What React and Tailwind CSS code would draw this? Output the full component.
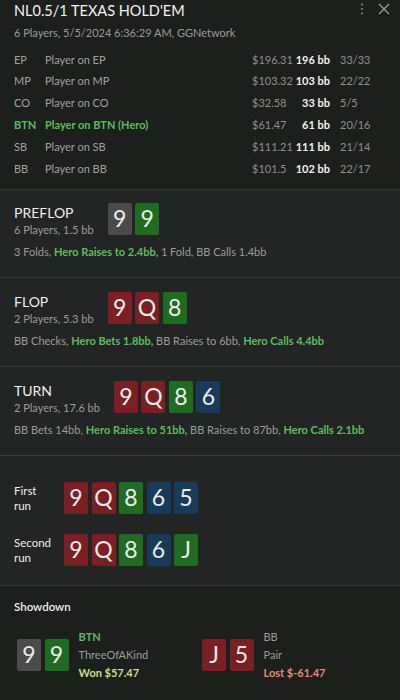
import React from "react";

const players = [
  { pos: "EP", name: "Player on EP", usd: "$196.31", bb: "196 bb", stat: "33/33" },
  { pos: "MP", name: "Player on MP", usd: "$103.32", bb: "103 bb", stat: "22/22" },
  { pos: "CO", name: "Player on CO", usd: "$32.58", bb: "33 bb", stat: "5/5" },
  { pos: "BTN", name: "Player on BTN (Hero)", usd: "$61.47", bb: "61 bb", stat: "20/16", hero: true },
  { pos: "SB", name: "Player on SB", usd: "$111.21", bb: "111 bb", stat: "21/14" },
  { pos: "BB", name: "Player on BB", usd: "$101.5", bb: "102 bb", stat: "22/17" },
];

const suitBg = {
  x: "bg-[#4a4b4a]",
  g: "bg-[#1f6b22]",
  r: "bg-[#7a2024]",
  b: "bg-[#1a3a5a]",
};

function Card({ rank, suit }) {
  return (
    <div
      className={`w-[24px] h-[32px] rounded-[2px] flex items-center justify-center text-[23px] leading-none text-[#ececec] ${suitBg[suit]}`}
    >
      {rank}
    </div>
  );
}

function Cards({ cards }) {
  return (
    <div className="flex gap-[3.5px]">
      {cards.map((c, i) => (
        <Card key={i} rank={c[0]} suit={c[1]} />
      ))}
    </div>
  );
}

function Street({ name, sub, cards, actions, pad }) {
  return (
    <div className={`border-t border-[#363937] bg-[#222523] px-[14px] ${pad}`}>
      <div className="flex items-start gap-[14px]">
        <div className="flex flex-col">
          <span className="text-[14px] leading-[19px] text-[#eeeeee]">{name}</span>
          <span className="text-[11px] leading-[16px] text-[#9b9b9b]">{sub}</span>
        </div>
        <Cards cards={cards} />
      </div>
      <div className="mt-[6px] text-[11px] leading-[16px] text-[#9b9b9b] whitespace-nowrap">
        {actions.map((a, i) => (
          <span key={i} className={a.hero ? "font-bold text-[#62b862]" : ""}>
            {a.t}
            {i < actions.length - 1 ? ", " : ""}
          </span>
        ))}
      </div>
    </div>
  );
}

export default function App() {
  return (
    <div className="w-[400px] h-[700px] overflow-hidden bg-[#1d1f1d] font-['Lato','Liberation_Sans',sans-serif] text-white">
      {/* header */}
      <div className="relative px-[14px] pt-[1px]">
        <div className="text-[14.5px] leading-[20px] text-[#f2f2f2]">NL0.5/1 TEXAS HOLD'EM</div>
        <div className="mt-[4px] text-[11px] leading-[16px] text-[#9a9a9a]">
          6 Players, 5/5/2024 6:36:29 AM, GGNetwork
        </div>
        <div className="absolute right-[10px] top-[3px] flex items-center gap-[14px]">
          <svg width="4" height="12" viewBox="0 0 4 12" fill="#8a8a8a">
            <circle cx="2" cy="1.5" r="1" />
            <circle cx="2" cy="6" r="1" />
            <circle cx="2" cy="10.5" r="1" />
          </svg>
          <svg width="12" height="12" viewBox="0 0 12 12" stroke="#a0a0a0" strokeWidth="1.2">
            <path d="M1 1L11 11M11 1L1 11" />
          </svg>
        </div>
      </div>

      {/* players */}
      <div className="mt-[8px] px-[14px] pb-[9px]">
        {players.map((p) => (
          <div key={p.pos} className="flex items-center h-[21.8px] text-[11px] whitespace-nowrap">
            <span className={`w-[31px] ${p.hero ? "font-bold text-[#62b862]" : "text-[#a0a0a0]"}`}>{p.pos}</span>
            <span className={`w-[207px] ${p.hero ? "font-bold text-[#62b862]" : "text-[#a0a0a0]"}`}>{p.name}</span>
            <span className="w-[42px] text-[#8e8e8e]">{p.usd}</span>
            <span className="w-[36px] text-right font-bold text-[#f0f0f0]">{p.bb}</span>
            <span className="ml-[10px] text-[#8e8e8e]">{p.stat}</span>
          </div>
        ))}
      </div>

      <Street
        name="PREFLOP"
        sub="6 Players, 1.5 bb"
        cards={["9x", "9g"]}
        pad="pt-[13px] pb-[17px]"
        actions={[
          { t: "3 Folds" },
          { t: "Hero Raises to 2.4bb", hero: true },
          { t: "1 Fold" },
          { t: "BB Calls 1.4bb" },
        ]}
      />
      <Street
        name="FLOP"
        sub="2 Players, 5.3 bb"
        cards={["9r", "Qr", "8g"]}
        pad="pt-[14px] pb-[17px]"
        actions={[
          { t: "BB Checks" },
          { t: "Hero Bets 1.8bb", hero: true },
          { t: "BB Raises to 6bb" },
          { t: "Hero Calls 4.4bb", hero: true },
        ]}
      />
      <Street
        name="TURN"
        sub="2 Players, 17.6 bb"
        cards={["9r", "Qr", "8g", "6b"]}
        pad="pt-[14px] pb-[17px]"
        actions={[
          { t: "BB Bets 14bb" },
          { t: "Hero Raises to 51bb", hero: true },
          { t: "BB Raises to 87bb" },
          { t: "Hero Calls 2.1bb", hero: true },
        ]}
      />

      {/* runs */}
      <div className="border-t border-[#363937] bg-[#222523] px-[14px] pt-[26px] pb-[19px] flex flex-col gap-[20px]">
        <div className="flex items-center">
          <div className="w-[50px] text-[11.5px] leading-[15px] text-[#eeeeee]">
            First
            <br />
            run
          </div>
          <Cards cards={["9r", "Qr", "8g", "6b", "5b"]} />
        </div>
        <div className="flex items-center">
          <div className="w-[50px] text-[11.5px] leading-[15px] text-[#eeeeee]">
            Second
            <br />
            run
          </div>
          <Cards cards={["9r", "Qr", "8g", "6b", "Jg"]} />
        </div>
      </div>

      {/* showdown */}
      <div className="border-t border-b border-[#363937] bg-[#1d1f1d] pt-[13px] pb-[25px]">
        <div className="px-[14px] text-[11.5px] leading-[16px] font-semibold text-[#eeeeee]">Showdown</div>
        <div className="mt-[13px] flex px-[17px]">
          <div className="w-[185px] flex items-center gap-[10px]">
            <Cards cards={["9x", "9g"]} />
            <div className="flex flex-col text-[11px] leading-[18px]">
              <span className="font-bold text-[#62b862]">BTN</span>
              <span className="text-[#9b9b9b]">ThreeOfAKind</span>
              <span className="font-bold text-[#c6df86]">Won $57.47</span>
            </div>
          </div>
          <div className="flex items-center gap-[10px]">
            <Cards cards={["Jr", "5r"]} />
            <div className="flex flex-col text-[11px] leading-[18px]">
              <span className="text-[#9b9b9b]">BB</span>
              <span className="text-[#9b9b9b]">Pair</span>
              <span className="font-bold text-[#e08a7a]">Lost $-61.47</span>
            </div>
          </div>
        </div>
      </div>
    </div>
  );
}
